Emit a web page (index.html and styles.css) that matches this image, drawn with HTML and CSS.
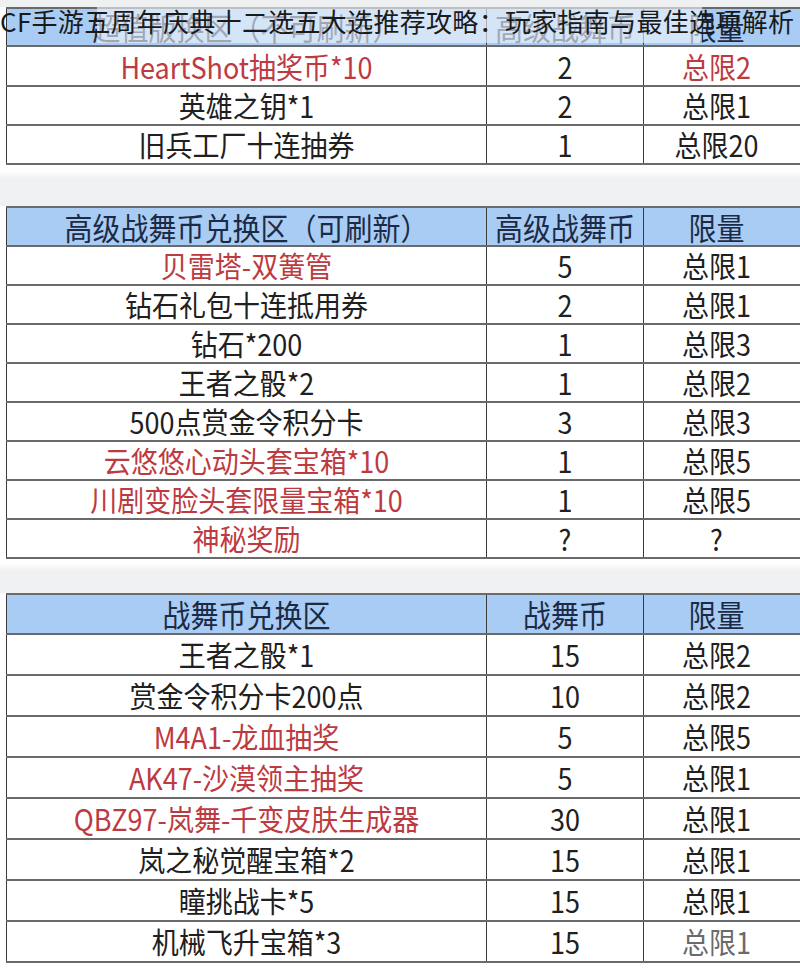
FILE: index.html
```html
<!DOCTYPE html>
<html lang="zh-CN">
<head>
<meta charset="utf-8">
<title>CF手游五周年庆典十二选五大选推荐攻略</title>
<link rel="stylesheet" href="styles.css">
</head>
<body>
<div class="page">
  <h1 class="title">CF手游五周年庆典十二选五大选推荐攻略：玩家指南与最佳选项解析</h1>
  <div class="fade"></div>
  <div class="strip"></div>

  <table class="tbl">
    <colgroup><col class="c1"><col class="c2"><col class="c3"></colgroup>
    <tr class="hd h38"><th><span class="tx">超值版换区（不可刷新）</span></th><th><span class="tx">高级战舞币</span></th><th class="lim"><span class="tx">限量</span></th></tr>
    <tr class="h40"><td class="red"><span class="tx">HeartShot抽奖币*10</span></td><td><span class="tx">2</span></td><td class="lim red"><span class="tx">总限2</span></td></tr>
    <tr class="h39"><td><span class="tx">英雄之钥*1</span></td><td><span class="tx">2</span></td><td class="lim"><span class="tx">总限1</span></td></tr>
    <tr class="h39"><td><span class="tx">旧兵工厂十连抽券</span></td><td><span class="tx">1</span></td><td class="lim"><span class="tx">总限20</span></td></tr>
  </table>

  <div class="gap g1"></div>

  <table class="tbl">
    <colgroup><col class="c1"><col class="c2"><col class="c3"></colgroup>
    <tr class="hd h39"><th><span class="tx">高级战舞币兑换区（可刷新）</span></th><th><span class="tx">高级战舞币</span></th><th class="lim"><span class="tx">限量</span></th></tr>
    <tr class="h39"><td class="red"><span class="tx">贝雷塔-双簧管</span></td><td><span class="tx">5</span></td><td class="lim"><span class="tx">总限1</span></td></tr>
    <tr class="h39"><td><span class="tx">钻石礼包十连抵用券</span></td><td><span class="tx">2</span></td><td class="lim"><span class="tx">总限1</span></td></tr>
    <tr class="h39"><td><span class="tx">钻石*200</span></td><td><span class="tx">1</span></td><td class="lim"><span class="tx">总限3</span></td></tr>
    <tr class="h39"><td><span class="tx">王者之骰*2</span></td><td><span class="tx">1</span></td><td class="lim"><span class="tx">总限2</span></td></tr>
    <tr class="h39"><td><span class="tx">500点赏金令积分卡</span></td><td><span class="tx">3</span></td><td class="lim"><span class="tx">总限3</span></td></tr>
    <tr class="h39"><td class="red"><span class="tx">云悠悠心动头套宝箱*10</span></td><td><span class="tx">1</span></td><td class="lim"><span class="tx">总限5</span></td></tr>
    <tr class="h39"><td class="red"><span class="tx">川剧变脸头套限量宝箱*10</span></td><td><span class="tx">1</span></td><td class="lim"><span class="tx">总限5</span></td></tr>
    <tr class="h39"><td class="red"><span class="tx">神秘奖励</span></td><td><span class="tx">?</span></td><td class="lim"><span class="tx">?</span></td></tr>
  </table>

  <div class="gap g2"></div>

  <table class="tbl">
    <colgroup><col class="c1"><col class="c2"><col class="c3"></colgroup>
    <tr class="hd h40"><th><span class="tx">战舞币兑换区</span></th><th><span class="tx">战舞币</span></th><th class="lim"><span class="tx">限量</span></th></tr>
    <tr class="h41"><td><span class="tx">王者之骰*1</span></td><td><span class="tx">15</span></td><td class="lim"><span class="tx">总限2</span></td></tr>
    <tr class="h41"><td><span class="tx">赏金令积分卡200点</span></td><td><span class="tx">10</span></td><td class="lim"><span class="tx">总限2</span></td></tr>
    <tr class="h41"><td class="red"><span class="tx">M4A1-龙血抽奖</span></td><td><span class="tx">5</span></td><td class="lim"><span class="tx">总限5</span></td></tr>
    <tr class="h41"><td class="red"><span class="tx">AK47-沙漠领主抽奖</span></td><td><span class="tx">5</span></td><td class="lim"><span class="tx">总限1</span></td></tr>
    <tr class="h41"><td class="red"><span class="tx">QBZ97-岚舞-千变皮肤生成器</span></td><td><span class="tx">30</span></td><td class="lim"><span class="tx">总限1</span></td></tr>
    <tr class="h41"><td><span class="tx">岚之秘觉醒宝箱*2</span></td><td><span class="tx">15</span></td><td class="lim"><span class="tx">总限1</span></td></tr>
    <tr class="h41"><td><span class="tx">瞳挑战卡*5</span></td><td><span class="tx">15</span></td><td class="lim"><span class="tx">总限1</span></td></tr>
    <tr class="h41"><td><span class="tx">机械飞升宝箱*3</span></td><td><span class="tx">15</span></td><td class="lim faint"><span class="tx">总限1</span></td></tr>
  </table>
</div>
</body>
</html>
```

FILE: styles.css
```css
* { box-sizing: border-box; }

html, body {
  margin: 0;
  padding: 0;
  background: #ffffff;
  overflow: hidden;
}

.page {
  position: relative;
  width: 800px;
  height: 969px;
  overflow: hidden;
  background: #ffffff;
  font-family: "Noto Sans CJK SC", "Noto Sans", sans-serif;
}

.title {
  position: absolute;
  top: 0;
  left: 0;
  margin: 0;
  z-index: 3;
  font-size: 26px;
  line-height: 42px;
  font-weight: 400;
  color: #1a1a1a;
  white-space: nowrap;
  letter-spacing: 0.3px;
}

.fade {
  position: absolute;
  top: 7px;
  left: 97px;
  width: 605px;
  height: 36px;
  z-index: 2;
  background: rgba(240, 244, 250, 0.62);
}

.strip {
  height: 7px;
  background: #eef0f2;
}

.tbl {
  border-collapse: collapse;
  table-layout: fixed;
  width: 840px;
  margin-left: 6px;
  background: #ffffff;
}

.c1 { width: 480px; }
.c2 { width: 157px; }
.c3 { width: 203px; }

.tbl th,
.tbl td {
  padding: 0;
  text-align: center;
  vertical-align: middle;
  border-top: 2px solid #6a6a6a;
  border-bottom: 2px solid #6a6a6a;
  border-left: 1.5px solid #3a3a3a;
  border-right: 1.5px solid #3a3a3a;
  line-height: 1;
  white-space: nowrap;
}

.tx {
  display: inline-block;
  transform: scaleY(1.08);
}

.tbl td {
  font-size: 27px;
  font-weight: 400;
  color: #202020;
}

.tbl th {
  font-size: 28px;
  font-weight: 400;
  color: #1c2a45;
  background: #a8ccf4;
}

.tbl .lim { padding-right: 57px; }

.tbl .red { color: #bd3a41; }
.tbl .faint { color: #6a6a6a; }

.h38 { height: 38px; }
.h39 { height: 39px; }
.h40 { height: 40px; }
.h41 { height: 41px; }

.gap { background: #f0f1f3; }
.g1 {
  height: 41px;
  background: linear-gradient(#ffffff 0 6px, #f0f1f3 14px);
}
.g2 {
  height: 34px;
  background: linear-gradient(#ffffff 0 4px, #f0f1f3 12px);
}
```
